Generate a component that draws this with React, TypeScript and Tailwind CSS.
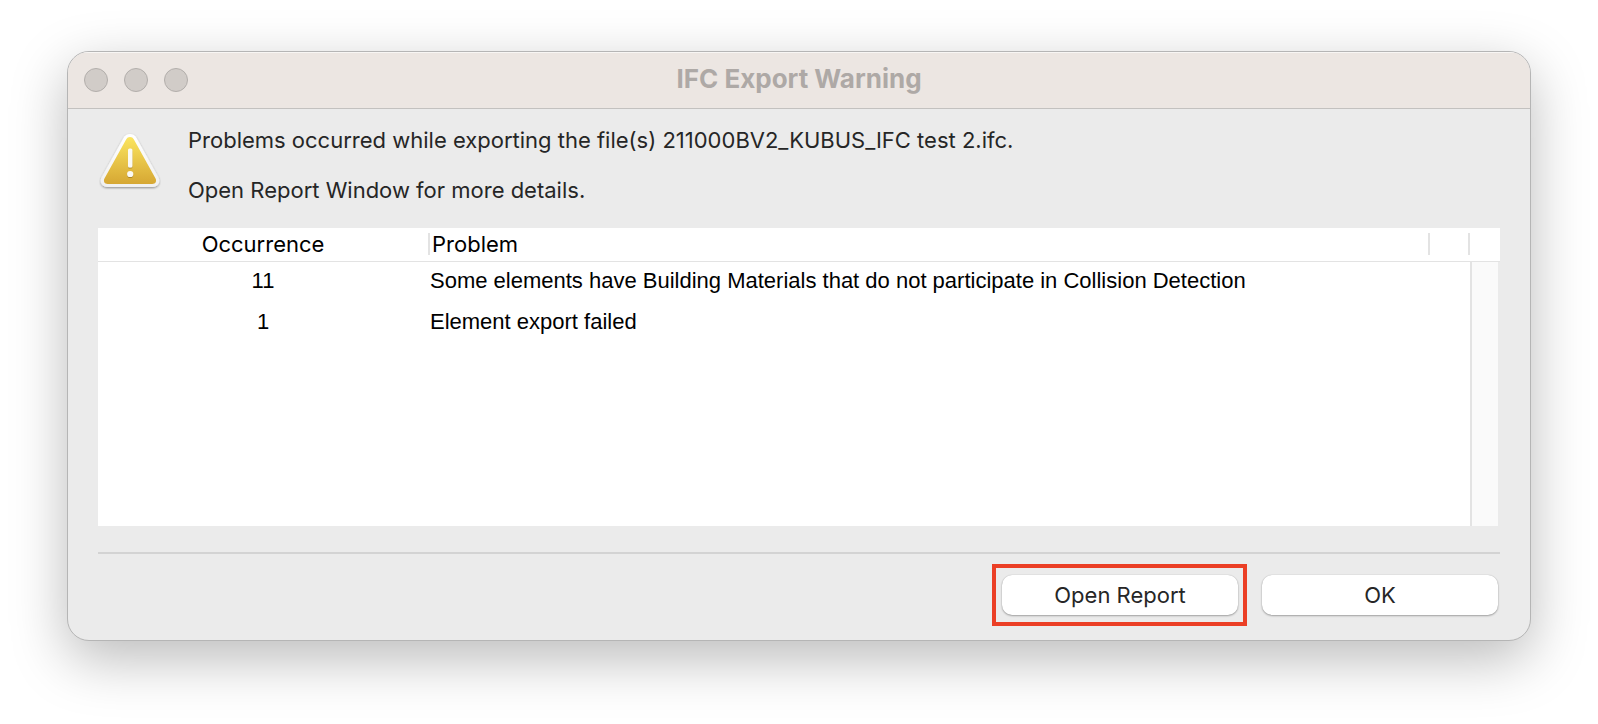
interface Problem {
  id: string;
  occurrence: number;
  text: string;
}

const problems: Problem[] = [
  {
    id: 'collision-detection',
    occurrence: 11,
    text: 'Some elements have Building Materials that do not participate in Collision Detection'
  },
  { id: 'export-failed', occurrence: 1, text: 'Element export failed' }
];

const WarningIcon = () => (
  <svg width="62" height="62" viewBox="0 0 62 62" aria-hidden="true">
    <defs>
      <linearGradient id="warning-fill" x1="0" y1="0" x2="0" y2="1">
        <stop offset="0" stopColor="#fbe55f" />
        <stop offset="1" stopColor="#d6a733" />
      </linearGradient>
      <linearGradient id="warning-rim" x1="0" y1="0" x2="0" y2="1">
        <stop offset="0" stopColor="#ffffff" />
        <stop offset="1" stopColor="#f0f0f0" />
      </linearGradient>
      <filter id="warning-shadow" x="-20%" y="-20%" width="140%" height="140%">
        <feDropShadow dx="0" dy="1" stdDeviation="1" floodColor="#000" floodOpacity="0.4" />
      </filter>
      <filter id="mark-shadow" x="-100%" y="-20%" width="300%" height="150%">
        <feDropShadow dx="0" dy="1" stdDeviation="0.6" floodColor="#7a5a10" floodOpacity="0.5" />
      </filter>
    </defs>
    <path
      d="M31 3c2.900 0 5.100 1.300 6.600 3.900L59.300 46c2.600 4.700 0 10-5.500 10H8.200C2.700 56 .1 50.700 2.700 46L24.400 6.900C25.900 4.300 28.100 3 31 3z"
      fill="url(#warning-rim)"
      filter="url(#warning-shadow)"
    />
    <path
      d="M31 6c1.700 0 3 .8 3.900 2.500L56.400 47.300c1.600 2.900.2 5.700-3.100 5.700H8.700c-3.300 0-4.700-2.800-3.100-5.700L27.100 8.500C28 6.800 29.300 6 31 6z"
      fill="url(#warning-fill)"
    />
    <g fill="#fbfaf5" filter="url(#mark-shadow)">
      <rect x="29" y="17.500" width="4.400" height="19" rx="1.600" />
      <circle cx="31.200" cy="43" r="3.100" />
    </g>
  </svg>
);

const TitleBar = ({ title }: { title: string }) => (
  <header className="flex h-[57px] items-center border-b border-[#c3c1bf] bg-[#ece6e2] px-4 shadow-[inset_0_1px_0_#f8f6f4]">
    <div className="flex flex-1 gap-4">
      <button type="button" aria-label="Close" className="size-6 rounded-full border border-[#b2aeab] bg-[#d1ccc8]" />
      <button type="button" aria-label="Minimize" className="size-6 rounded-full border border-[#b2aeab] bg-[#d1ccc8]" />
      <button type="button" aria-label="Zoom" className="size-6 rounded-full border border-[#b2aeab] bg-[#d1ccc8]" />
    </div>
    <h1 className="pb-0.5 text-[26px] leading-8 font-bold text-[#aea9a6]">{title}</h1>
    <div className="flex-1" />
  </header>
);

const ProblemTable = () => (
  <table className="w-full table-fixed border-collapse text-[22px] text-black">
    <colgroup>
      <col className="w-[330px]" />
      <col />
      <col className="w-10" />
      <col className="w-8" />
    </colgroup>
    <thead>
      <tr className="h-[33px] border-b border-[#e3e3e3] bg-white">
        <th className="p-0 leading-[22px] font-normal">Occurrence</th>
        <th className="p-0 text-left font-normal">
          <div className="h-[22px] border-l-2 border-[#e3e3e3] pl-0.5 leading-[22px]">Problem</div>
        </th>
        <td className="p-0">
          <div className="h-[22px] border-l-2 border-[#e3e3e3]" />
        </td>
        <td className="p-0">
          <div className="h-[22px] border-l-2 border-[#e3e3e3]" />
        </td>
      </tr>
    </thead>
    <tbody className="font-['Liberation_Sans',Arial,sans-serif]">
      {problems.map((problem, index) => (
        <tr key={problem.id} className="h-[42px] align-top leading-[38px]">
          <td className="bg-white p-0 text-center">{problem.occurrence}</td>
          <td className="bg-white p-0 pl-0.5 whitespace-nowrap" colSpan={2}>
            {problem.text}
          </td>
          {/* Empty scroll track, runs down the whole list */}
          {index === 0 && (
            <td className="h-px p-0" rowSpan={problems.length + 1}>
              <div className="mr-[2px] h-[264px] border-l-2 border-white bg-white">
                <div className="h-full border-l-2 border-[#e3e3e3] bg-[#fafafa]" />
              </div>
            </td>
          )}
        </tr>
      ))}
      <tr className="h-[180px]">
        <td className="bg-white p-0" colSpan={3} />
      </tr>
    </tbody>
  </table>
);

const DialogButton = ({ label }: { label: string }) => (
  <button
    type="button"
    className="h-10 w-[236px] rounded-[10px] bg-white text-[22px] leading-7 text-[#262626] shadow-[0_0_1px_rgba(0,0,0,0.25),0_1px_2px_rgba(0,0,0,0.3)]"
  >
    {label}
  </button>
);

const App = () => {
  return (
    <div className="min-h-screen bg-white px-[67px] py-[51px] font-['Inter',sans-serif]">
      <main className="overflow-hidden rounded-[22px] border border-[#b5b5b5] bg-[#ebebeb] shadow-[0_18px_56px_rgba(0,0,0,0.27)]">
        <TitleBar title="IFC Export Warning" />

        <div className="px-[30px] pb-[14px]">
          <div className="flex gap-[27px] pt-[17px] pb-6">
            <div className="w-[63px] shrink-0 pt-[5px] pl-px">
              <WarningIcon />
            </div>
            <div className="flex flex-col gap-[22px] text-[22px] leading-7 text-[#262626]">
              <p>Problems occurred while exporting the file(s) 211000BV2_KUBUS_IFC test 2.ifc.</p>
              <p>Open Report Window for more details.</p>
            </div>
          </div>

          <ProblemTable />

          <footer className="mt-[26px] border-t-2 border-[#d3d3d3] pt-[10px]">
            <div className="flex items-center justify-end gap-[15px] pr-[2px]">
              <div className="border-4 border-[#eb3f25] py-[7px] pr-[5px] pl-[6px]">
                <DialogButton label="Open Report" />
              </div>
              <DialogButton label="OK" />
            </div>
          </footer>
        </div>
      </main>
    </div>
  );
};

export default App;
